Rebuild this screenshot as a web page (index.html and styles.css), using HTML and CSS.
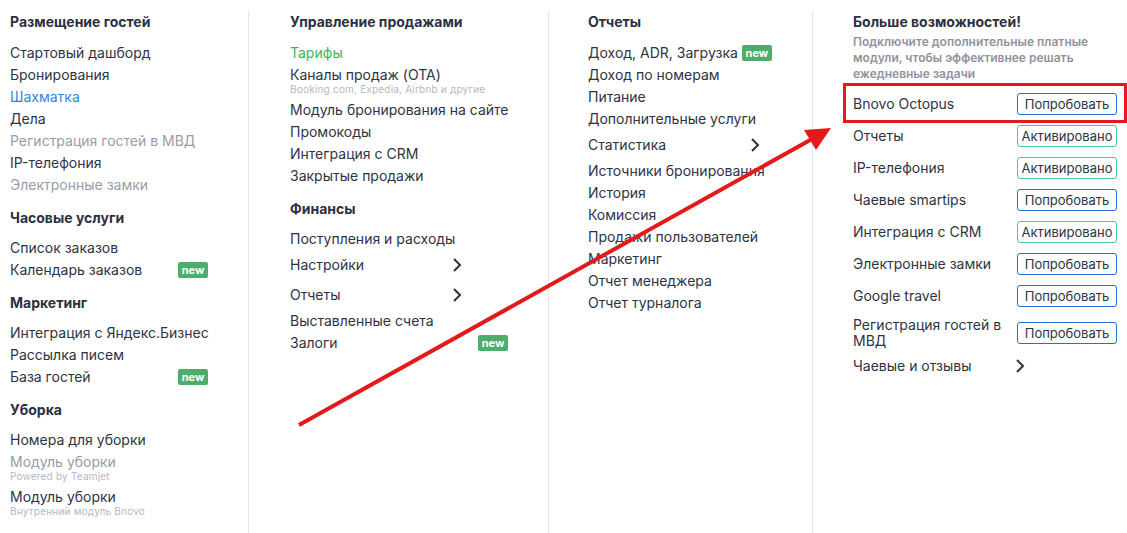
FILE: index.html
```html
<!DOCTYPE html>
<html lang="ru">

<head>
  <meta charset="UTF-8">
  <meta name="viewport" content="width=device-width, initial-scale=1.0">
  <title>Меню</title>
  <link rel="stylesheet" href="styles.css">
</head>

<body>
  <div class="menu">
    <div class="col col-guests">
      <div class="section">
        <div class="title">Размещение гостей</div>
        <a class="item">Стартовый дашборд</a>
        <a class="item">Бронирования</a>
        <a class="item active">Шахматка</a>
        <a class="item">Дела</a>
        <a class="item muted">Регистрация гостей в МВД</a>
        <a class="item">IP-телефония</a>
        <a class="item muted">Электронные замки</a>
      </div>
      <div class="section">
        <div class="title">Часовые услуги</div>
        <a class="item">Список заказов</a>
        <a class="item with-badge">Календарь заказов <span class="badge">new</span></a>
      </div>
      <div class="section">
        <div class="title">Маркетинг</div>
        <a class="item">Интеграция с Яндекс.Бизнес</a>
        <a class="item">Рассылка писем</a>
        <a class="item with-badge">База гостей <span class="badge">new</span></a>
      </div>
      <div class="section">
        <div class="title">Уборка</div>
        <a class="item">Номера для уборки</a>
        <a class="item muted">Модуль уборки</a>
        <div class="sub">Powered by Teamjet</div>
        <a class="item">Модуль уборки</a>
        <div class="sub">Внутренний модуль Bnovo</div>
      </div>
    </div>

    <div class="col col-sales">
      <div class="section">
        <div class="title">Управление продажами</div>
        <a class="item current">Тарифы</a>
        <a class="item">Каналы продаж (OTA)</a>
        <div class="sub">Booking.com, Expedia, Airbnb и другие</div>
        <a class="item">Модуль бронирования на сайте</a>
        <a class="item">Промокоды</a>
        <a class="item">Интеграция с CRM</a>
        <a class="item">Закрытые продажи</a>
      </div>
      <div class="section">
        <div class="title">Финансы</div>
        <a class="item">Поступления и расходы</a>
        <a class="item submenu">Настройки <svg class="chevron" viewBox="0 0 10 16"><polyline points="2,2 8,8 2,14" /></svg></a>
        <a class="item submenu">Отчеты <svg class="chevron" viewBox="0 0 10 16"><polyline points="2,2 8,8 2,14" /></svg></a>
        <a class="item">Выставленные счета</a>
        <a class="item with-badge">Залоги <span class="badge">new</span></a>
      </div>
    </div>

    <div class="col col-reports">
      <div class="section">
        <div class="title">Отчеты</div>
        <a class="item">Доход, ADR, Загрузка <span class="badge inline">new</span></a>
        <a class="item">Доход по номерам</a>
        <a class="item">Питание</a>
        <a class="item">Дополнительные услуги</a>
        <a class="item submenu">Статистика <svg class="chevron" viewBox="0 0 10 16"><polyline points="2,2 8,8 2,14" /></svg></a>
        <a class="item">Источники бронирования</a>
        <a class="item">История</a>
        <a class="item">Комиссия</a>
        <a class="item">Продажи пользователей</a>
        <a class="item">Маркетинг</a>
        <a class="item">Отчет менеджера</a>
        <a class="item">Отчет турналога</a>
      </div>
    </div>

    <div class="col col-more">
      <div class="title">Больше возможностей!</div>
      <p class="lead">Подключите дополнительные платные модули, чтобы эффективнее решать ежедневные задачи</p>
      <div class="modules">
        <div class="module"><span>Bnovo Octopus</span><button class="btn try">Попробовать</button></div>
        <div class="module"><span>Отчеты</span><button class="btn on">Активировано</button></div>
        <div class="module"><span>IP-телефония</span><button class="btn on">Активировано</button></div>
        <div class="module"><span>Чаевые smartips</span><button class="btn try">Попробовать</button></div>
        <div class="module"><span>Интеграция с CRM</span><button class="btn on">Активировано</button></div>
        <div class="module"><span>Электронные замки</span><button class="btn try">Попробовать</button></div>
        <div class="module"><span>Google travel</span><button class="btn try">Попробовать</button></div>
        <div class="module"><span>Регистрация гостей в МВД</span><button class="btn try">Попробовать</button></div>
        <a class="item submenu">Чаевые и отзывы <svg class="chevron" viewBox="0 0 10 16"><polyline points="2,2 8,8 2,14" /></svg></a>
      </div>
    </div>
  </div>

  <!-- red callout drawn over the menu -->
  <svg class="callout" width="1127" height="533" viewBox="0 0 1127 533">
    <rect x="844.5" y="84.5" width="281" height="37" fill="none" stroke="#e3191b" stroke-width="3" />
    <line x1="299" y1="425" x2="812" y2="139" stroke="#e3191b" stroke-width="4" />
    <polygon points="831,128 804,130 816,150" fill="#e3191b" />
  </svg>
</body>

</html>
```

FILE: styles.css
```css
body {
  margin: 0;
  font-family: Inter, "Noto Sans", sans-serif;
  font-size: 14px;
  color: #2e3344;
  background: #fff;
}

.menu {
  display: flex;
  height: 533px;
  padding: 11px 0 0 10px;
  box-sizing: border-box;
}

.col {
  display: flex;
  flex-direction: column;
  box-sizing: border-box;
}

.col-guests {
  width: 238px;
}

.col-sales {
  width: 300px;
  padding-left: 41px;
  border-left: 1px solid #e4e6eb;
}

.col-reports {
  width: 264px;
  padding-left: 39px;
  border-left: 1px solid #e4e6eb;
}

.col-more {
  flex: 1;
  padding-left: 40px;
  border-left: 1px solid #e4e6eb;
}

.section + .section {
  margin-top: 11px;
}

.title {
  font-weight: 700;
  line-height: 22px;
  margin-bottom: 9px;
  color: #2c3142;
}

.section + .section .title {
  margin-bottom: 8px;
}

.item {
  display: flex;
  align-items: center;
  height: 22px;
  line-height: 22px;
  cursor: pointer;
  white-space: nowrap;
}

.item.muted {
  color: #989ca8;
}

.item.active {
  color: #3584e4;
}

.item.current {
  color: #3db452;
}

.col-guests .item.with-badge {
  width: 198px;
  justify-content: space-between;
}

.col-sales .item.with-badge {
  width: 218px;
  justify-content: space-between;
}

.item.submenu {
  width: 172px;
  height: 30px;
  justify-content: space-between;
}

.chevron {
  width: 10px;
  height: 16px;
  fill: none;
  stroke: #2e3344;
  stroke-width: 2;
}

.sub {
  font-size: 10px;
  line-height: 12px;
  margin: -3px 0 4px;
  color: #b4b8c1;
  letter-spacing: 0.2px;
}

.badge {
  display: inline-block;
  width: 30px;
  height: 16px;
  line-height: 16px;
  border-radius: 2px;
  background: #4fad6c;
  color: #fff;
  font-size: 11px;
  font-weight: 700;
  text-align: center;
}

.badge.inline {
  margin-left: 4px;
}

.lead {
  margin: -8px 0 0;
  width: 262px;
  font-size: 12px;
  font-weight: 600;
  line-height: 16px;
  color: #8f939e;
}

.modules {
  display: flex;
  flex-direction: column;
  gap: 10px;
  margin-top: 11px;
  width: 264px;
}

.module {
  display: flex;
  align-items: center;
  justify-content: space-between;
  min-height: 22px;
  line-height: 16px;
}

.module span {
  max-width: 155px;
}

.modules .item.submenu {
  margin-top: -8px;
}

.btn {
  width: 100px;
  height: 22px;
  padding: 0;
  border-radius: 3px;
  background: #fff;
  font-family: inherit;
  font-size: 13px;
  color: #2e3344;
  cursor: pointer;
}

.btn.try {
  border: 1px solid #1d6fdc;
}

.btn.on {
  border: 1px solid #45c98c;
}

.callout {
  position: absolute;
  left: 0;
  top: 0;
  pointer-events: none;
}
```
